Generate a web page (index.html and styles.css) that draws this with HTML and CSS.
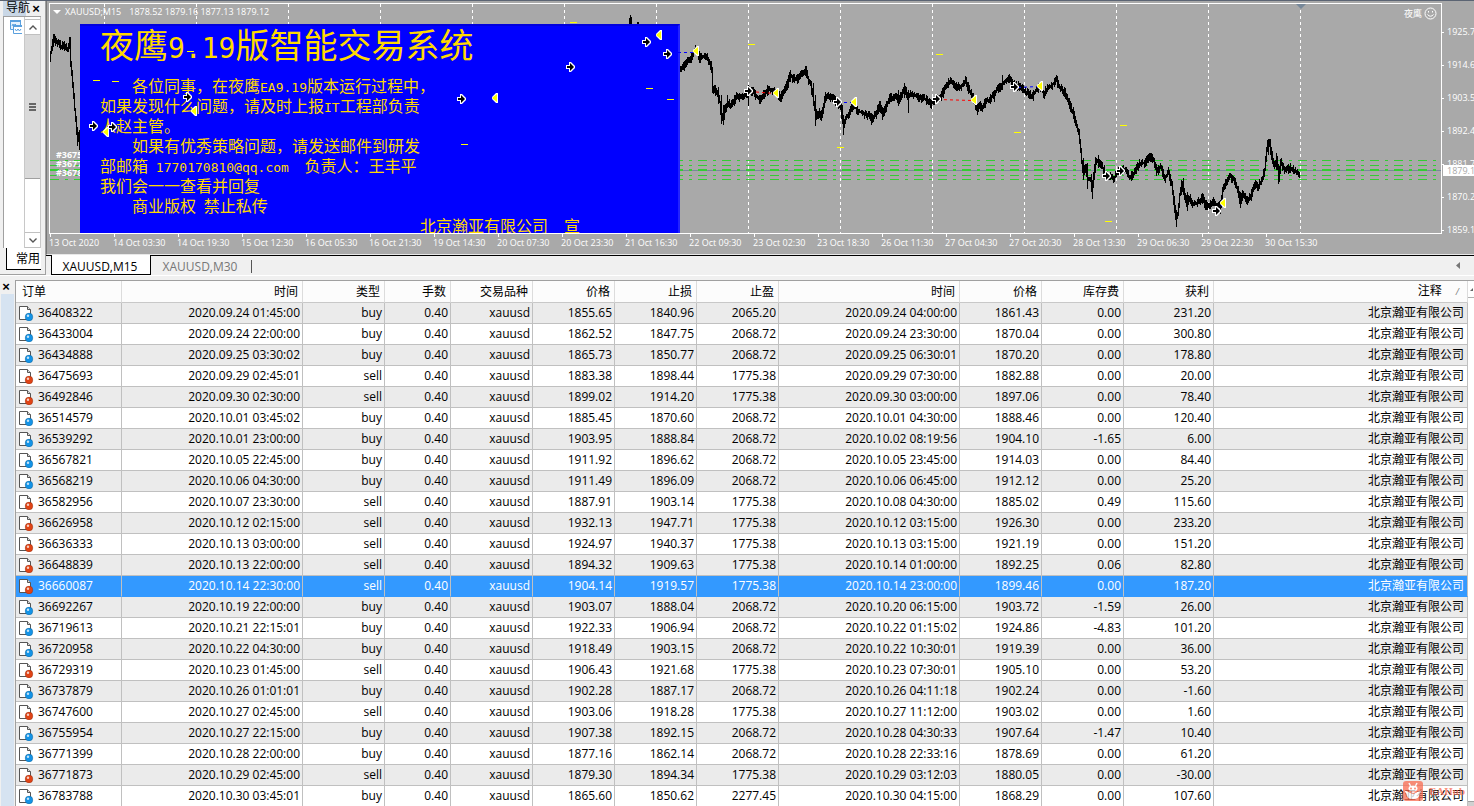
FILE: index.html
```html
<!DOCTYPE html>
<html lang="zh-CN">
<head>
<meta charset="utf-8">
<title>XAUUSD,M15</title>
<link rel="stylesheet" href="styles.css">
</head>
<body>
<svg class="defs" aria-hidden="true">
  <defs>
    <symbol id="doc" viewBox="0 0 15 16" overflow="visible">
      <path d="M.5 1.500h8l3 3v10H.5z" fill="#fff" stroke="#555"/>
      <path d="M8.500 1.500v3h3" fill="#ddd" stroke="#555"/>
      <circle cx="10" cy="12" r="3.900" fill="currentColor" stroke="#0004" stroke-width=".6"/>
      <circle cx="9" cy="10.700" r="1.200" fill="#fff" opacity=".75"/>
    </symbol>
    <g id="entry"><path d="M-4-2h3v-3h2L5-1v2L1 5h-2V2h-3z" fill="#fff"/><path d="M-3-1h3v-3L4 0 0 4V1h-3z" fill="#000"/></g>
    <g id="exit"><path d="M3-5v10H1L-3 1v-2L1-5z" fill="#fff"/><path d="M2-4v8L-3 0z" fill="#ff0"/></g>
  </defs>
</svg>

<div class="top">
  <aside class="nav">
    <header class="nav-title"><span>导航</span><button class="close" aria-label="关闭导航">×</button></header>
    <div class="nav-body">
      <div class="tree">
        <svg width="12" height="15" viewBox="0 0 12 15"><path d="M.5 9.500V.500H10.500V6" fill="#e6f2fd" stroke="#5aa0de"/><path d="M.5 9.500H4M2 6l1-2 1 2 1-2 1 1" fill="none" stroke="#5aa0de"/><path d="M0 1h11" stroke="#5aa0de" stroke-width="2"/><path d="M12 5.500H3.500v8H12" fill="#fff" stroke="#5aa0de"/><path d="M3 6h9" stroke="#5aa0de" stroke-width="2"/><path d="M5 9l1.500 2 1.500-2 1.500 2 1.500-2" fill="none" stroke="#5aa0de"/></svg>
      </div>
      <div class="scroll">
        <button aria-label="向上"><svg width="8" height="5"><path d="M.5 4.500l3.500-3.500 3.500 3.500" fill="none" stroke="#555" stroke-width="1.400"/></svg></button>
        <div class="thumb"><i></i><i></i><i></i></div>
        <div class="track"></div>
        <button aria-label="向下"><svg width="8" height="5"><path d="M.5.500L4 4 7.500.500" fill="none" stroke="#555" stroke-width="1.400"/></svg></button>
      </div>
    </div>
    <button class="nav-tab">常用</button>
  </aside>

  <main class="chart-area">
    <div class="chart">
      <div class="plot">
        <svg class="layer" id="base"></svg>
        <div class="symbol"><svg width="8" height="4"><path d="M0 0h8L4 4z" fill="#fff"/></svg><span>XAUUSD;M15</span><span>1878.52 1879.16 1877.13 1879.12</span></div>
        <div class="expert">夜鹰<svg width="13" height="13" viewBox="0 0 13 13" fill="none" stroke="#fff"><circle cx="6.500" cy="6.500" r="5.500"/><path d="M3.500 7.500q3 3.500 6 0M4.500 4v1.500M8.500 4v1.500"/></svg></div>
        <div class="orders"><span>#36755954</span><span>#36771873</span><span>#36783788</span></div>
        <section class="notice">
          <h1>夜鹰<b>9.19</b>版智能交易系统</h1>
          <p class="indent">各位同事，在夜鹰<b>EA9.19</b>版本运行过程中，</p>
          <p>如果发现什么问题，请及时上报<b>IT</b>工程部负责</p>
          <p>人赵主管。</p>
          <p class="indent">如果有优秀策略问题，请发送邮件到研发</p>
          <p>部邮箱<b> 1770170810@qq.com  </b>负责人：王丰平</p>
          <p>我们会一一查看并回复</p>
          <p class="indent">商业版权<b> </b>禁止私传</p>
          <p class="sign">北京瀚亚有限公司　宣</p>
        </section>
        <svg class="layer" id="marks"></svg>
      </div>
      <div class="prices"><span>1925.7</span><span>1914.6</span><span>1903.5</span><span>1892.4</span><span>1881.7</span><span>1870.2</span><span>1859.1</span><strong>1879.1</strong></div>
      <div class="times" id="times"></div>
    </div>
    <nav class="tabs"><button class="tab active">XAUUSD,M15</button><button class="tab">XAUUSD,M30</button><span class="tab-end"></span><button class="tab-left" aria-label="向左"><svg width="4" height="7"><path d="M4 0v7L0 3.500z" fill="#777"/></svg></button></nav>
  </main>
</div>

<section class="terminal">
  <div class="strip"><button class="close" aria-label="关闭终端">×</button><div class="strip-fill"></div></div>
  <div class="grid">
    <table>
      <colgroup><col class="w-id"><col class="w-time"><col class="w-num"><col class="w-lot"><col class="w-num"><col class="w-num"><col class="w-num"><col class="w-num"><col class="w-time"><col class="w-num"><col class="w-num"><col class="w-profit"><col></colgroup>
      <thead><tr><th>订单</th><th>时间</th><th>类型</th><th>手数</th><th>交易品种</th><th>价格</th><th>止损</th><th>止盈</th><th>时间</th><th>价格</th><th>库存费</th><th>获利</th><th>注释<i class="sort">/</i></th></tr></thead>
      <tbody id="rows"></tbody>
    </table>
  </div>
  <div class="side"><div class="side-top"><svg width="5" height="4"><path d="M2 4l3-3v3z" fill="#666"/></svg></div><div class="side-thumb"></div></div>
  <div class="watermark">
    <svg width="20" height="20" viewBox="0 0 20 20"><rect width="20" height="20" rx="3" fill="#fa6b50"/><path d="M6 2l2 4M14 2l-2 4" stroke="#fff" stroke-width="1.500"/><ellipse cx="10" cy="7.500" rx="4.500" ry="3" fill="#fff"/><path d="M1.500 9.500l4 1.500h9l4-1.500-2 3.500q0 5-6.500 5t-6.500-5z" fill="#fff"/><path d="M6 11q4 3 8 0" fill="none" stroke="#fa6b50"/><circle cx="8" cy="7.500" r="1" fill="#fa6b50"/><circle cx="12" cy="7.500" r="1" fill="#fa6b50"/></svg>
    <span>EAHub</span>
  </div>
</section>
<script src="app.js"></script>
</body>
</html>
```

FILE: styles.css
```css
* { box-sizing: border-box; }
body { margin: 0; height: 100vh; overflow: hidden; display: flex; flex-direction: column; background: #f0f0f0; color: #000; font: 12px/16px "Open Sans", "Noto Sans CJK SC", sans-serif; }
button { margin: 0; padding: 0; border: 0; background: none; font: inherit; color: inherit; }
.defs { position: absolute; width: 0; height: 0; }
.top { display: flex; height: 276px; flex: none; border-top: 1px solid #5b6473; border-bottom: 1px solid #fff; }

.nav { width: 46px; flex: none; display: flex; flex-direction: column; padding-left: 3px; border-right: 1px solid #a0a0a0; border-bottom: 1px solid #a0a0a0; padding-bottom: 4px; }
.nav-title { display: flex; height: 15px; padding-left: 3px; line-height: 14px; background: linear-gradient(90deg, #c9d7e6 60%, #f0f0f0 60%); margin-right: 4px; justify-content: space-between; }
.nav-title span { white-space: nowrap; }
.close { width: 10px; font: bold 13px/14px "Liberation Sans", sans-serif; }
.nav-body { flex: 1; display: flex; margin-right: 4px; border-left: 1px solid #a0a0a0; border-top: 1px solid #a0a0a0; background: #fff; }
.tree { flex: 1; padding: 3px 0 0 6px; overflow: hidden; }
.scroll { width: 17px; display: flex; flex-direction: column; padding-top: 2px; border-left: 1px solid #c8c8c8; border-right: 1px solid #c8c8c8; }
.scroll button { height: 16px; display: flex; align-items: center; justify-content: center; border: 1px solid #c0c0c0; border-width: 1px 0; }
.thumb { height: 144px; background: #dadada; border-bottom: 1px solid #a0a0a0; display: flex; flex-direction: column; gap: 1px; align-items: center; justify-content: center; }
.thumb i { width: 7px; height: 2px; background: #666; }
.track { flex: 1; }
.nav-tab { height: 22px; margin: 0 4px 0 3px; padding-left: 9px; background: #fff; border-left: 1px solid #000; border-bottom: 1px solid #000; white-space: nowrap; text-align: left; }

.chart-area { flex: 1; min-width: 0; display: flex; flex-direction: column; }
.chart { flex: 1; display: grid; grid-template-columns: 1fr 32px; grid-template-rows: 1fr 20px; padding: 2px 0 0 2px; background: #a9a9a9; border-left: 1px solid #777; border-bottom: 1px solid #e8e8e8; color: #fff; font-size: 9px; line-height: 12px; overflow: hidden; }
.plot { position: relative; border: 1px solid #fff; overflow: hidden; }
.layer { position: absolute; left: 0; top: 0; width: 100%; height: 100%; }
.symbol { position: absolute; left: 3px; top: 2px; display: flex; gap: 8px; align-items: center; }
.symbol svg { margin-right: -4px; }
.expert { position: absolute; right: 4px; top: 3px; display: flex; align-items: center; gap: 2px; }
.orders { position: absolute; left: 6px; top: 145px; display: flex; flex-direction: column; font-weight: bold; }
.orders span { height: 9px; }
.notice { position: absolute; left: 30px; top: 20px; width: 600px; height: 209px; padding: 0 20px; background: #00f; border-right: 2px solid #2222ff; border-top: 2px solid #0000dc; color: #ffd900; overflow: hidden; font: 16px/20px "Noto Sans CJK SC", sans-serif; }
.notice h1 { margin: 0 0 8px; font-size: 34px; line-height: 36px; font-weight: 400; white-space: nowrap; }
.notice h1 b { font: 28px/36px "DejaVu Sans Mono", monospace; }
.notice p { margin: 0; white-space: pre; height: 20px; }
.notice p b { font: 13px/20px "DejaVu Sans Mono", monospace; }
.notice .indent { padding-left: 32px; }
.notice .sign { padding-left: 320px; }
.prices { position: relative; padding: 23px 0 0 5px; overflow: hidden; white-space: nowrap; }
.prices span { display: block; height: 33px; position: relative; }
.prices span::before { content: ""; position: absolute; left: -5px; top: 6px; width: 2px; height: 1px; background: #fff; }
.prices strong { position: absolute; left: 1px; right: 0; top: 162px; height: 11px; padding-left: 4px; background: #fff; color: #a9a9a9; font-weight: 400; line-height: 11px; }
.times { display: flex; overflow: hidden; white-space: nowrap; grid-column: 1 / 3; }
.times span { width: 64px; flex: none; padding-top: 3px; position: relative; }
.times span::before { content: ""; position: absolute; left: 1px; top: 0; width: 1px; height: 3px; background: #fff; }
.tabs { height: 20px; display: flex; border-top: 1px solid #000; padding-left: 5px; align-items: flex-start; }
.tab { width: 100px; height: 18px; padding: 2px 2px 0 0; color: #777; line-height: 18px; }
.tab.active { background: #fff; border: solid #000; border-width: 0 1px 1px; color: #000; margin-top: -1px; padding-top: 3px; height: 20px; line-height: 18px; }
.tab-end { width: 1px; height: 13px; margin-top: 4px; background: #555; }
.tab-left { margin: 0 14px 0 auto; height: 17px; line-height: 17px; }

.terminal { flex: 1; min-height: 0; position: relative; display: flex; margin-top: 4px; }
.strip { width: 15px; display: flex; flex-direction: column; padding-left: 1px; }
.strip .close { height: 14px; line-height: 10px; }
.strip-fill { flex: 1; background: #d6e3f1; margin-right: 1px; }
.grid { flex: 1; min-width: 0; border-left: 1px solid #a0a0a0; border-top: 1px solid #a0a0a0; overflow: hidden; background: #fff; }
table { width: 100%; table-layout: fixed; border-collapse: separate; border-spacing: 0; }
.w-id { width: 106px; } .w-time { width: 181px; } .w-num { width: 82px; } .w-lot { width: 66px; } .w-profit { width: 90px; }
th { height: 22px; padding: 0 4px 0 0; background: #fcfcfc; border-right: 1px solid #dcdcdc; border-bottom: 1px solid #c8c8c8; font-weight: 400; text-align: right; line-height: 20px; white-space: nowrap; }
th:first-child { text-align: left; padding-left: 6px; }
th:last-child { padding-right: 8px; }
.sort { margin-left: 14px; font-size: 9px; color: #777; }
td { height: 21px; padding: 0 2px 0 0; border-right: 1px solid #c0c0c0; border-bottom: 1px solid #c0c0c0; text-align: right; line-height: 20px; white-space: nowrap; overflow: hidden; }
td:first-child { text-align: left; padding-left: 3px; }
td:last-child { padding-right: 3px; }
tr:nth-child(odd) td { background: #ebebeb; }
tbody tr.selected td { background: #39f; color: #fff; border-bottom-color: #39f; }
td:first-child div { display: flex; align-items: center; gap: 4px; }
td svg { width: 15px; height: 16px; }
.buy { color: #1493e6; }
.sell { color: #e04416; }
.side { width: 6px; display: flex; flex-direction: column; justify-content: space-between; border-top: 1px solid #a0a0a0; background: #fff; }
.side-top { height: 17px; display: flex; align-items: center; border-bottom: 1px solid #b0b0b0; }
.side-thumb { height: 5px; background: #d0d0d0; border-top: 1px solid #a0a0a0; }
.watermark { position: absolute; right: 9px; bottom: 5px; display: flex; align-items: center; gap: 6px; opacity: .75; color: #fa6b50; font: bold 11px/20px "Liberation Serif", serif; }
```

FILE: app.js
```js
const orders = `36408322|2020.09.24 01:45:00|buy|1855.65|1840.96|2065.20|2020.09.24 04:00:00|1861.43|0.00|231.20
36433004|2020.09.24 22:00:00|buy|1862.52|1847.75|2068.72|2020.09.24 23:30:00|1870.04|0.00|300.80
36434888|2020.09.25 03:30:02|buy|1865.73|1850.77|2068.72|2020.09.25 06:30:01|1870.20|0.00|178.80
36475693|2020.09.29 02:45:01|sell|1883.38|1898.44|1775.38|2020.09.29 07:30:00|1882.88|0.00|20.00
36492846|2020.09.30 02:30:00|sell|1899.02|1914.20|1775.38|2020.09.30 03:00:00|1897.06|0.00|78.40
36514579|2020.10.01 03:45:02|buy|1885.45|1870.60|2068.72|2020.10.01 04:30:00|1888.46|0.00|120.40
36539292|2020.10.01 23:00:00|buy|1903.95|1888.84|2068.72|2020.10.02 08:19:56|1904.10|-1.65|6.00
36567821|2020.10.05 22:45:00|buy|1911.92|1896.62|2068.72|2020.10.05 23:45:00|1914.03|0.00|84.40
36568219|2020.10.06 04:30:00|buy|1911.49|1896.09|2068.72|2020.10.06 06:45:00|1912.12|0.00|25.20
36582956|2020.10.07 23:30:00|sell|1887.91|1903.14|1775.38|2020.10.08 04:30:00|1885.02|0.49|115.60
36626958|2020.10.12 02:15:00|sell|1932.13|1947.71|1775.38|2020.10.12 03:15:00|1926.30|0.00|233.20
36636333|2020.10.13 03:00:00|sell|1924.97|1940.37|1775.38|2020.10.13 03:15:00|1921.19|0.00|151.20
36648839|2020.10.13 22:00:00|sell|1894.32|1909.63|1775.38|2020.10.14 01:00:00|1892.25|0.06|82.80
36660087|2020.10.14 22:30:00|sell|1904.14|1919.57|1775.38|2020.10.14 23:00:00|1899.46|0.00|187.20
36692267|2020.10.19 22:00:00|buy|1903.07|1888.04|2068.72|2020.10.20 06:15:00|1903.72|-1.59|26.00
36719613|2020.10.21 22:15:01|buy|1922.33|1906.94|2068.72|2020.10.22 01:15:02|1924.86|-4.83|101.20
36720958|2020.10.22 04:30:00|buy|1918.49|1903.15|2068.72|2020.10.22 10:30:01|1919.39|0.00|36.00
36729319|2020.10.23 01:45:00|sell|1906.43|1921.68|1775.38|2020.10.23 07:30:01|1905.10|0.00|53.20
36737879|2020.10.26 01:01:01|buy|1902.28|1887.17|2068.72|2020.10.26 04:11:18|1902.24|0.00|-1.60
36747600|2020.10.27 02:45:00|sell|1903.06|1918.28|1775.38|2020.10.27 11:12:00|1903.02|0.00|1.60
36755954|2020.10.27 22:15:00|buy|1907.38|1892.15|2068.72|2020.10.28 04:30:33|1907.64|-1.47|10.40
36771399|2020.10.28 22:00:00|buy|1877.16|1862.14|2068.72|2020.10.28 22:33:16|1878.69|0.00|61.20
36771873|2020.10.29 02:45:00|sell|1879.30|1894.34|1775.38|2020.10.29 03:12:03|1880.05|0.00|-30.00
36783788|2020.10.30 03:45:01|buy|1865.60|1850.62|2277.45|2020.10.30 04:15:00|1868.29|0.00|107.60`;

document.getElementById('rows').innerHTML = orders.split('\n').map(line => {
  const [id, open, type, price, sl, tp, close, out, swap, profit] = line.split('|');
  const cells = [open, type, '0.40', 'xauusd', price, sl, tp, close, out, swap, profit, '北京瀚亚有限公司'];
  const icon = `<svg class="${type}"><use href="#doc"/></svg>`;
  return `<tr${id === '36660087' ? ' class="selected"' : ''}><td><div>${icon}${id}</div></td>${cells.map(c => `<td>${c}</td>`).join('')}</tr>`;
}).join('');

document.getElementById('times').innerHTML = ['13 Oct 2020', '14 Oct 03:30', '14 Oct 19:30', '15 Oct 12:30', '16 Oct 05:30', '16 Oct 21:30', '19 Oct 14:30', '20 Oct 07:30', '20 Oct 23:30', '21 Oct 16:30', '22 Oct 09:30', '23 Oct 02:30', '23 Oct 18:30', '26 Oct 11:30', '27 Oct 04:30', '27 Oct 20:30', '28 Oct 13:30', '29 Oct 06:30', '29 Oct 22:30', '30 Oct 15:30'].map(t => `<span>${t}</span>`).join('');

const series = [
  '50,57 52,48 54,38 56,42 58,43 61,46 65,46 68,50 70,42 71,62 73,85 75,110 77,130 79,140',
  '680,69 684,67 687,62 690,60 693,54 695,50 698,53 700,58 704,56 707,58 710,62 712,68 713,88 716,90 718,93 720,102 722,118 723,120 725,110 728,103 731,106 734,101 737,97 741,97 744,97 747,94 749,90 753,92 756,95 759,99 761,98 765,94 768,89 771,90 775,92 778,94 781,98 784,91 788,83 790,75 793,78 797,80 800,76 803,74 806,71 808,78 811,85 813,95 815,110 817,117 819,113 822,117 825,98 828,97 831,98 834,99 838,103 841,108 843,122 844,125 846,118 850,112 854,103 858,112 862,112 866,115 869,116 872,119 876,114 880,105 883,115 886,108 890,97 893,98 896,96 899,101 903,92 905,88 908,98 911,93 915,95 918,97 922,99 926,99 931,104 934,101 937,98 940,99 943,93 946,86 951,80 955,86 960,87 964,84 966,80 969,90 973,97 977,110 980,106 983,107 986,101 990,101 993,95 997,90 1000,88 1004,82 1007,80 1010,78 1013,84 1018,86 1023,89 1028,94 1032,95 1036,91 1040,86 1044,94 1048,88 1052,85 1057,80 1060,88 1064,91 1067,97 1070,105 1073,112 1076,122 1079,132 1081,150 1083,172 1086,168 1088,180 1091,178 1092,190 1094,176 1096,162 1098,160 1101,165 1104,170 1107,175 1110,176 1114,179 1118,172 1122,170 1126,170 1130,178 1135,172 1140,163 1145,163 1150,157 1154,160 1157,172 1161,166 1165,178 1169,172 1172,185 1174,200 1176,218 1178,213 1180,195 1182,185 1184,192 1187,203 1190,197 1193,205 1197,203 1200,200 1203,198 1206,208 1210,205 1214,202 1218,207 1221,205 1223,190 1226,182 1230,176 1234,180 1238,190 1240,202 1243,194 1247,200 1251,196 1255,185 1258,187 1262,180 1265,170 1267,150 1268,142 1270,145 1273,160 1275,165 1277,160 1279,178 1281,163 1285,170 1290,168 1295,170 1298,174 1300,175'
].map(s => s.split(' ').map(p => p.split(',').map(Number)));
const spikes = [[53, 34, 46], [70, 37, 60], [77, 130, 146], [79, 130, 150], [629, 18, 24], [630, 15, 24], [631, 17, 24], [637, 22, 24], [638, 22, 24], [715, 85, 96], [718, 87, 104], [721, 95, 124], [723, 105, 125], [727, 95, 108], [748, 85, 106], [760, 95, 104], [768, 86, 95], [790, 72, 82], [806, 66, 78], [813, 83, 106], [815, 95, 126], [821, 110, 121], [825, 92, 103], [842, 105, 123], [843, 115, 135], [871, 113, 125], [882, 107, 120], [904, 83, 98], [908, 90, 113], [898, 90, 106], [977, 104, 115], [994, 90, 102], [1002, 75, 90], [1033, 90, 101], [1057, 76, 88], [1083, 158, 180], [1087, 163, 189], [1092, 180, 199], [1098, 155, 168], [1151, 153, 162], [1176, 210, 227], [1183, 178, 195], [1187, 192, 211], [1206, 200, 210], [1240, 192, 208], [1220, 200, 214], [1268, 140, 155], [1270, 139, 155], [1276, 153, 170], [1278, 170, 184]];

let seed = 7;
const rand = () => (seed = (seed * 16807) % 2147483647) / 2147483647;
let d = '';
for (const pts of series) {
  for (let i = 1; i < pts.length; i++) {
    const [x0, y0] = pts[i - 1], [x1, y1] = pts[i];
    for (let x = x0; x < x1; x++) {
      const a = y0 + (y1 - y0) * (x - x0) / (x1 - x0), b = y0 + (y1 - y0) * (x + 1 - x0) / (x1 - x0);
      const hi = Math.round(Math.min(a, b) - 1 - rand() * 4), lo = Math.round(Math.max(a, b) + 1 + rand() * 4);
      d += `M${x + .5} ${hi}V${lo}`;
    }
  }
}
for (const [x, y0, y1] of spikes) d += `M${x + .5} ${y0}V${y1}`;

let base = '<g transform="translate(-50,-4)" fill="none">';
for (let x = 104; x <= 1300; x += 92) base += `<path d="M${x + .5} 4V233" stroke="#fff" stroke-dasharray="3 3"/>`;
base += '<path d="M50 170.500H1442" stroke="#778899"/>';
for (const y of [160.5, 165.5, 170, 175.5, 179.5]) base += `<path d="M50 ${y}H1437" stroke="#32cd32" stroke-width="${y === 170 ? 2 : 1}" stroke-dasharray="9 6 3 6"/>`;
base += `<path d="${d}" stroke="#000" shape-rendering="crispEdges"/><path d="M1296 4h10l-5 5z" fill="#778899"/></g>`;
document.getElementById('base').innerHTML = base;

let marks = '<g transform="translate(-50,-4)">';
for (const [x0, y0, x1, y1, c] of [[678, 52, 694, 52, '#00f'], [750, 91, 774, 93, 'red'], [838, 102, 852, 102, '#00f'], [938, 99, 972, 100, 'red'], [1018, 87, 1038, 86, '#00f'], [1218, 211, 1222, 204, '#00f']])
  marks += `<path d="M${x0} ${y0 + .5}L${x1} ${y1 + .5}" stroke="${c}" stroke-dasharray="3 3"/>`;
for (const [x, y] of [[93, 80], [112, 81], [187, 51], [461, 144], [646, 88], [667, 99], [570, 22], [748, 44], [837, 147], [936, 54], [1014, 132], [1120, 125], [1105, 221]])
  marks += `<path d="M${x} ${y + .5}h7" stroke="#ff0"/>`;
for (const [x, y] of [[93, 126], [112, 127], [187, 97], [461, 99], [570, 67], [646, 42], [667, 54], [748, 91], [837, 102], [936, 99], [1014, 87], [1106, 176], [1120, 171], [1216, 211]])
  marks += `<use href="#entry" x="${x}" y="${y}"/>`;
for (const [x, y] of [[194, 111], [106, 132], [495, 98], [659, 35], [696, 51], [776, 93], [854, 102], [974, 100], [1040, 86], [1223, 203]])
  marks += `<use href="#exit" x="${x}" y="${y}"/>`;
document.getElementById('marks').innerHTML = marks + '</g>';
```
